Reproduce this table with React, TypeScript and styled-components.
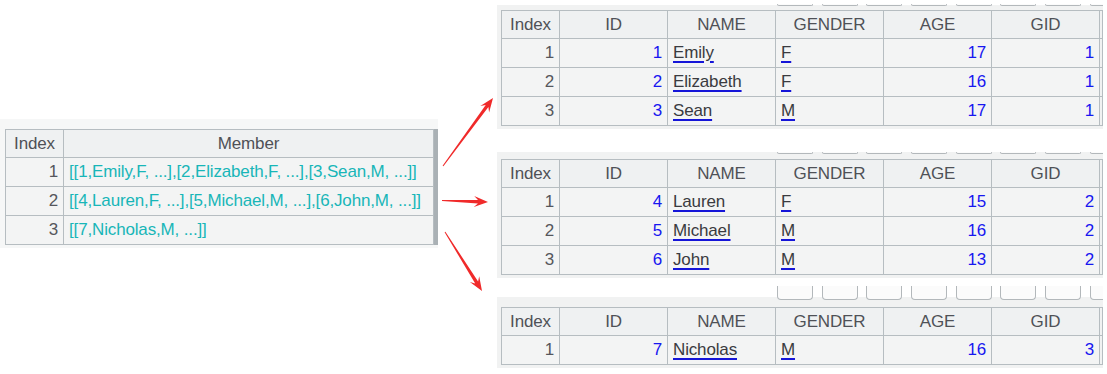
import React from "react";
import styled, { createGlobalStyle } from "styled-components";

const GlobalStyle = createGlobalStyle`
  html, body { margin: 0; padding: 0; background: #ffffff; }
  body { font-family: "Liberation Sans", Arial, sans-serif; }
  * { box-sizing: border-box; }
`;

const BORDER = "#b6bdc1";

const Page = styled.div`
  position: relative;
  width: 1107px;
  height: 374px;
  display: flex;
  align-items: flex-start;
  overflow: hidden;
  background: #ffffff;
`;

const LeftColumn = styled.div`
  margin-top: 119px;
  width: 438px;
  display: flex;
  align-items: stretch;
  background: #f6f7f7;
  padding: 10px 0 3px 5px;
`;

const ScrollEdge = styled.div`
  width: 4px;
  background: #aab1b5;
`;

const RightColumn = styled.div`
  margin-left: 59px;
  width: 610px;
  display: flex;
  flex-direction: column;
`;

const Panel = styled.div<{ $top: number }>`
  margin-top: ${(p) => p.$top}px;
  width: 606px;
  background: #f1f2f2;
  padding: 0 0 3px 4px;
  overflow: hidden;
`;

const Toolbar = styled.div<{ $h: number; $white: number; $pad: number }>`
  height: ${(p) => p.$h}px;
  margin-left: -4px;
  display: flex;
  align-items: flex-start;
  gap: 8.7px;
  padding: ${(p) => p.$pad}px 0 0 280px;
  overflow: hidden;
  background: linear-gradient(
    to bottom,
    #ffffff 0,
    #ffffff ${(p) => p.$white}px,
    #f1f2f2 ${(p) => p.$white}px,
    #f1f2f2 100%
  );
`;

const ToolButton = styled.div<{ $h: number }>`
  flex-shrink: 0;
  width: 36px;
  height: ${(p) => p.$h}px;
  border: 1px solid #b3b8bb;
  border-top: none;
  border-radius: 0 0 4px 4px;
  background: #fbfbfb;
`;

const Grid = styled.div<{ $cols: string }>`
  display: grid;
  grid-template-columns: ${(p) => p.$cols};
  border-left: 1px solid ${BORDER};
  border-top: 1px solid ${BORDER};
`;

type Align = "left" | "right" | "center";

const Cell = styled.div<{ $align?: Align; $color?: string }>`
  height: 29px;
  display: flex;
  align-items: center;
  justify-content: ${(p) =>
    p.$align === "right" ? "flex-end" : p.$align === "center" ? "center" : "flex-start"};
  padding: 0 5px;
  border-right: 1px solid ${BORDER};
  border-bottom: 1px solid ${BORDER};
  background: #f3f4f4;
  color: ${(p) => p.$color || "#505257"};
  font-size: 17px;
  letter-spacing: -0.15px;
  white-space: nowrap;
  overflow: hidden;
`;

const HeadCell = styled(Cell)`
  height: 28px;
  background: #eff1f2;
  color: #4f5157;
`;

const TailCell = styled.div<{ $head?: boolean }>`
  height: ${(p) => (p.$head ? 28 : 29)}px;
  border-right: 1px solid ${BORDER};
  border-bottom: 1px solid ${BORDER};
  background: #f1f2f2;
`;

const LinkText = styled.span`
  color: #3a3b40;
  text-decoration: underline;
  text-decoration-color: #1515d8;
  text-decoration-thickness: 2px;
  text-underline-offset: 3px;
`;

const Overlay = styled.svg`
  position: absolute;
  left: 0;
  top: 0;
  pointer-events: none;
`;

const NUM = "#1717f0";
const TEAL = "#18b6b8";
const IDX = "#55575c";

type Person = [number, string, string, number, number];

const groups: Person[][] = [
  [
    [1, "Emily", "F", 17, 1],
    [2, "Elizabeth", "F", 16, 1],
    [3, "Sean", "M", 17, 1],
  ],
  [
    [4, "Lauren", "F", 15, 2],
    [5, "Michael", "M", 16, 2],
    [6, "John", "M", 13, 2],
  ],
  [[7, "Nicholas", "M", 16, 3]],
];

const members = [
  "[[1,Emily,F, ...],[2,Elizabeth,F, ...],[3,Sean,M, ...]]",
  "[[4,Lauren,F, ...],[5,Michael,M, ...],[6,John,M, ...]]",
  "[[7,Nicholas,M, ...]]",
];

const panels = [
  { top: 0, bar: 10, white: 5, stub: 2, pad: 4 },
  { top: 23, bar: 7, white: 0, stub: 2, pad: 0 },
  { top: 8, bar: 21, white: 11, stub: 14, pad: 0 },
];

const headers = ["Index", "ID", "NAME", "GENDER", "AGE", "GID"];

function arrowPoints(x1: number, y1: number, x2: number, y2: number): string {
  const headLen = 14;
  const headW = 11;
  const tailW = 1;
  const shaftW = 3.4;
  const dx = x2 - x1;
  const dy = y2 - y1;
  const L = Math.hypot(dx, dy);
  const ux = dx / L;
  const uy = dy / L;
  const nx = -uy;
  const ny = ux;
  const bx = x2 - ux * headLen * 0.72;
  const by = y2 - uy * headLen * 0.72;
  const wx = x2 - ux * headLen;
  const wy = y2 - uy * headLen;
  const pts: [number, number][] = [
    [x1 + (nx * tailW) / 2, y1 + (ny * tailW) / 2],
    [bx + (nx * shaftW) / 2, by + (ny * shaftW) / 2],
    [wx + (nx * headW) / 2, wy + (ny * headW) / 2],
    [x2, y2],
    [wx - (nx * headW) / 2, wy - (ny * headW) / 2],
    [bx - (nx * shaftW) / 2, by - (ny * shaftW) / 2],
    [x1 - (nx * tailW) / 2, y1 - (ny * tailW) / 2],
  ];
  return pts.map((p) => `${p[0].toFixed(1)},${p[1].toFixed(1)}`).join(" ");
}

const arrows: [number, number, number, number][] = [
  [443, 166, 493, 98],
  [442, 200.5, 488, 202],
  [445, 232, 482, 291],
];

export default function App() {
  return (
    <>
      <GlobalStyle />
      <Page>
        <LeftColumn>
          <Grid $cols="58px 370px">
            <HeadCell $align="center">Index</HeadCell>
            <HeadCell $align="center">Member</HeadCell>
            {members.map((m, i) => (
              <React.Fragment key={i}>
                <Cell $align="right" $color={IDX}>
                  {i + 1}
                </Cell>
                <Cell $align="left" $color={TEAL}>
                  {m}
                </Cell>
              </React.Fragment>
            ))}
          </Grid>
          <ScrollEdge />
        </LeftColumn>

        <RightColumn>
          {groups.map((rows, gi) => {
            const p = panels[gi];
            return (
              <Panel key={gi} $top={p.top}>
                <Toolbar $h={p.bar} $white={p.white} $pad={p.pad}>
                  {Array.from({ length: 8 }).map((_, k) => (
                    <ToolButton key={k} $h={p.stub} />
                  ))}
                </Toolbar>
                <Grid $cols="58px 108px 108px 108px 108px 108px 3px">
                  {headers.map((h) => (
                    <HeadCell key={h} $align="center">
                      {h}
                    </HeadCell>
                  ))}
                  <TailCell $head />
                  {rows.map((r, ri) => (
                    <React.Fragment key={ri}>
                      <Cell $align="right" $color={IDX}>
                        {ri + 1}
                      </Cell>
                      <Cell $align="right" $color={NUM}>
                        {r[0]}
                      </Cell>
                      <Cell $align="left">
                        <LinkText>{r[1]}</LinkText>
                      </Cell>
                      <Cell $align="left">
                        <LinkText>{r[2]}</LinkText>
                      </Cell>
                      <Cell $align="right" $color={NUM}>
                        {r[3]}
                      </Cell>
                      <Cell $align="right" $color={NUM}>
                        {r[4]}
                      </Cell>
                      <TailCell />
                    </React.Fragment>
                  ))}
                </Grid>
              </Panel>
            );
          })}
        </RightColumn>

        <Overlay width={1107} height={374} viewBox="0 0 1107 374">
          {arrows.map((a, i) => (
            <polygon key={i} points={arrowPoints(a[0], a[1], a[2], a[3])} fill="#f02a2a" />
          ))}
        </Overlay>
      </Page>
    </>
  );
}
